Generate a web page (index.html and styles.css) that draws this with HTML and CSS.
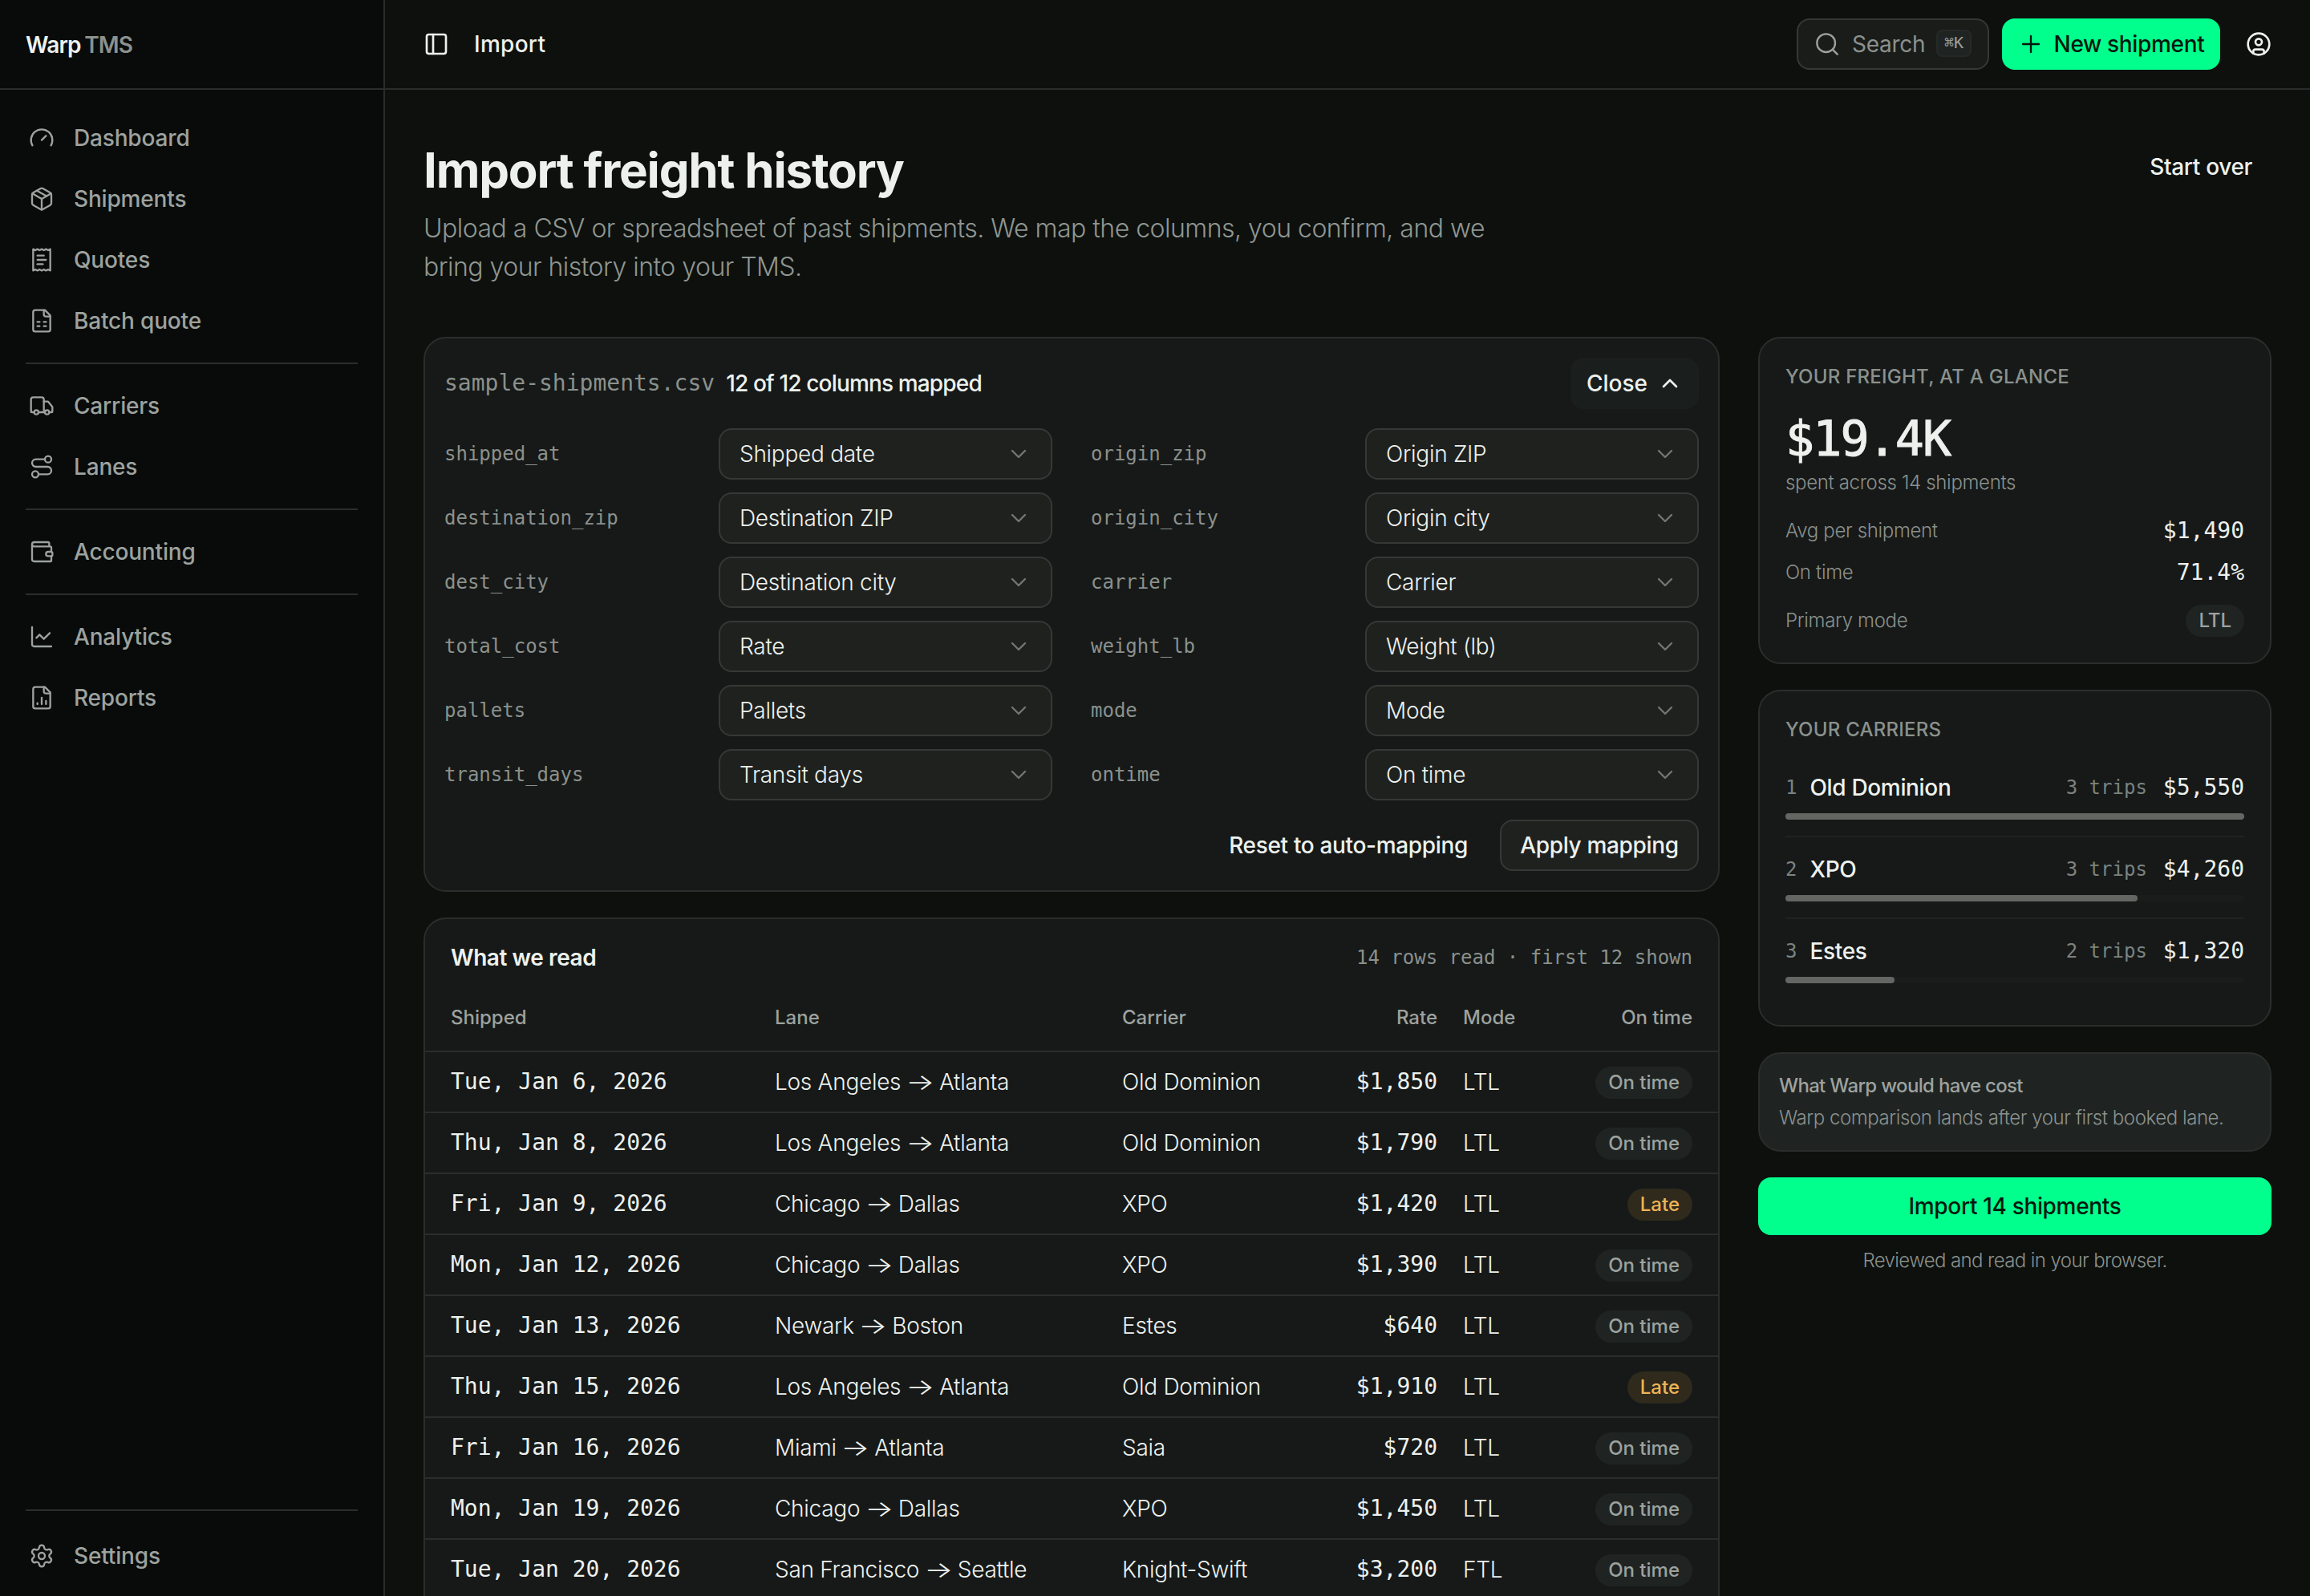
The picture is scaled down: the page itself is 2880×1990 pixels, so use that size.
FILE: index.html
```html
<!DOCTYPE html>
<html lang="en">
<head>
  <meta charset="UTF-8">
  <meta name="viewport" content="width=device-width, initial-scale=1.0">
  <title>Import - Warp TMS</title>
  <link rel="stylesheet" href="styles.css">
</head>
<body>
  <!-- shared select chevron -->
  <svg class="sprite" aria-hidden="true">
    <symbol id="chevron-down" viewBox="0 0 24 24"><path d="m6 9 6 6 6-6"/></symbol>
  </svg>

  <div class="app">
    <aside class="sidebar">
      <div class="brand">Warp <span>TMS</span></div>
      <nav class="nav">
        <a class="nav-item"><svg class="icon" viewBox="0 0 24 24"><path d="m12 14 4-4"/><path d="M3.34 19a10 10 0 1 1 17.32 0"/></svg>Dashboard</a>
        <a class="nav-item"><svg class="icon" viewBox="0 0 24 24"><path d="M11 21.73a2 2 0 0 0 2 0l7-4A2 2 0 0 0 21 16V8a2 2 0 0 0-1-1.73l-7-4a2 2 0 0 0-2 0l-7 4A2 2 0 0 0 3 8v8a2 2 0 0 0 1 1.73z"/><path d="M12 22V12"/><path d="m3.3 7 8.7 5 8.7-5"/><path d="m7.5 4.27 9 5.15"/></svg>Shipments</a>
        <a class="nav-item"><svg class="icon" viewBox="0 0 24 24"><path d="M4 2v20l2-1 2 1 2-1 2 1 2-1 2 1 2-1 2 1V2l-2 1-2-1-2 1-2-1-2 1-2-1-2 1Z"/><path d="M8 8h6"/><path d="M8 12h8"/><path d="M8 16h5"/></svg>Quotes</a>
        <a class="nav-item"><svg class="icon" viewBox="0 0 24 24"><path d="M15 2H6a2 2 0 0 0-2 2v16a2 2 0 0 0 2 2h12a2 2 0 0 0 2-2V7Z"/><path d="M14 2v4a2 2 0 0 0 2 2h4"/><path d="M8 13h2"/><path d="M14 13h2"/><path d="M8 17h2"/><path d="M14 17h2"/></svg>Batch quote</a>
        <hr>
        <a class="nav-item"><svg class="icon" viewBox="0 0 24 24"><path d="M14 18V6a2 2 0 0 0-2-2H4a2 2 0 0 0-2 2v11a1 1 0 0 0 1 1h2"/><path d="M15 18H9"/><path d="M19 18h2a1 1 0 0 0 1-1v-3.65a1 1 0 0 0-.22-.624l-3.48-4.35A1 1 0 0 0 17.52 8H14"/><circle cx="17" cy="18" r="2"/><circle cx="7" cy="18" r="2"/></svg>Carriers</a>
        <a class="nav-item"><svg class="icon" viewBox="0 0 24 24"><circle cx="6" cy="19" r="3"/><path d="M9 19h8.5a3.5 3.5 0 0 0 0-7h-11a3.5 3.5 0 0 1 0-7H15"/><circle cx="18" cy="5" r="3"/></svg>Lanes</a>
        <hr>
        <a class="nav-item"><svg class="icon" viewBox="0 0 24 24"><path d="M19 7V4a1 1 0 0 0-1-1H5a2 2 0 0 0 0 4h15a1 1 0 0 1 1 1v4h-3a2 2 0 0 0 0 4h3a1 1 0 0 0 1-1v-2a1 1 0 0 0-1-1"/><path d="M3 5v14a2 2 0 0 0 2 2h15a1 1 0 0 0 1-1v-4"/></svg>Accounting</a>
        <hr>
        <a class="nav-item"><svg class="icon" viewBox="0 0 24 24"><path d="M3 3v16a2 2 0 0 0 2 2h16"/><path d="m7 13 3-3 4 4 5.500-5.500"/></svg>Analytics</a>
        <a class="nav-item"><svg class="icon" viewBox="0 0 24 24"><path d="M15 2H6a2 2 0 0 0-2 2v16a2 2 0 0 0 2 2h12a2 2 0 0 0 2-2V7Z"/><path d="M14 2v4a2 2 0 0 0 2 2h4"/><path d="M8 18v-1"/><path d="M12 18v-6"/><path d="M16 18v-3"/></svg>Reports</a>
      </nav>
      <div class="nav nav-bottom">
        <hr>
        <a class="nav-item"><svg class="icon" viewBox="0 0 24 24"><path d="M9.671 4.136a2.34 2.34 0 0 1 4.659 0 2.34 2.34 0 0 0 3.319 1.915 2.34 2.34 0 0 1 2.33 4.033 2.34 2.34 0 0 0 0 3.831 2.34 2.34 0 0 1-2.33 4.033 2.34 2.34 0 0 0-3.319 1.915 2.34 2.34 0 0 1-4.659 0 2.34 2.34 0 0 0-3.32-1.915 2.34 2.34 0 0 1-2.33-4.033 2.34 2.34 0 0 0 0-3.831A2.34 2.34 0 0 1 6.35 6.051a2.34 2.34 0 0 0 3.319-1.915"/><circle cx="12" cy="12" r="3"/></svg>Settings</a>
      </div>
    </aside>

    <div class="main">
      <header class="topbar">
        <svg class="icon icon-bold" viewBox="0 0 24 24"><rect width="18" height="18" x="3" y="3" rx="2"/><path d="M9 3v18"/></svg>
        <span class="crumb">Import</span>
        <div class="search">
          <svg class="icon" viewBox="0 0 24 24"><circle cx="11" cy="11" r="8.500"/><path d="m21.500 21.500-4.300-4.300"/></svg>
          <span>Search</span>
          <kbd>⌘K</kbd>
        </div>
        <button class="btn btn-primary"><svg class="icon" viewBox="0 0 24 24"><path d="M4.500 12h15"/><path d="M12 4.500v15"/></svg>New shipment</button>
        <svg class="icon icon-bold user" viewBox="0 0 24 24"><circle cx="12" cy="12" r="10"/><circle cx="12" cy="10" r="3"/><path d="M7 20.662V19a2 2 0 0 1 2-2h6a2 2 0 0 1 2 2v1.662"/></svg>
      </header>

      <main class="content">
        <div class="page-head">
          <div>
            <h1>Import freight history</h1>
            <p>Upload a CSV or spreadsheet of past shipments. We map the columns, you confirm, and we bring your history into your TMS.</p>
          </div>
          <button class="btn btn-ghost">Start over</button>
        </div>

        <div class="columns">
          <div class="stack">
            <section class="card mapping">
              <div class="mapping-head">
                <span class="file">sample-shipments.csv</span>
                <span class="mapped">12 of 12 columns mapped</span>
                <button class="btn btn-close">Close<svg class="icon icon-bold" viewBox="0 0 24 24"><path d="m18 15-6-6-6 6"/></svg></button>
              </div>
              <div class="fields">
                <div class="field"><label>shipped_at</label><div class="select">Shipped date<svg class="icon"><use href="#chevron-down"/></svg></div></div>
                <div class="field"><label>origin_zip</label><div class="select">Origin ZIP<svg class="icon"><use href="#chevron-down"/></svg></div></div>
                <div class="field"><label>destination_zip</label><div class="select">Destination ZIP<svg class="icon"><use href="#chevron-down"/></svg></div></div>
                <div class="field"><label>origin_city</label><div class="select">Origin city<svg class="icon"><use href="#chevron-down"/></svg></div></div>
                <div class="field"><label>dest_city</label><div class="select">Destination city<svg class="icon"><use href="#chevron-down"/></svg></div></div>
                <div class="field"><label>carrier</label><div class="select">Carrier<svg class="icon"><use href="#chevron-down"/></svg></div></div>
                <div class="field"><label>total_cost</label><div class="select">Rate<svg class="icon"><use href="#chevron-down"/></svg></div></div>
                <div class="field"><label>weight_lb</label><div class="select">Weight (lb)<svg class="icon"><use href="#chevron-down"/></svg></div></div>
                <div class="field"><label>pallets</label><div class="select">Pallets<svg class="icon"><use href="#chevron-down"/></svg></div></div>
                <div class="field"><label>mode</label><div class="select">Mode<svg class="icon"><use href="#chevron-down"/></svg></div></div>
                <div class="field"><label>transit_days</label><div class="select">Transit days<svg class="icon"><use href="#chevron-down"/></svg></div></div>
                <div class="field"><label>ontime</label><div class="select">On time<svg class="icon"><use href="#chevron-down"/></svg></div></div>
              </div>
              <div class="mapping-actions">
                <button class="btn btn-ghost">Reset to auto-mapping</button>
                <button class="btn btn-outline">Apply mapping</button>
              </div>
            </section>

            <section class="card rows">
              <div class="table-head">
                <h2>What we read</h2>
                <span class="mono-note">14 rows read · first 12 shown</span>
              </div>
              <table>
                <colgroup><col class="c-date"><col class="c-lane"><col class="c-carrier"><col class="c-rate"><col class="c-mode"><col class="c-status"></colgroup>
                <thead>
                  <tr><th>Shipped</th><th>Lane</th><th>Carrier</th><th class="right">Rate</th><th>Mode</th><th class="right">On time</th></tr>
                </thead>
                <tbody>
                  <tr><td class="mono">Tue, Jan 6, 2026</td><td>Los Angeles <i class="arrow">→</i> Atlanta</td><td>Old Dominion</td><td class="mono right">$1,850</td><td>LTL</td><td class="right"><span class="badge">On time</span></td></tr>
                  <tr><td class="mono">Thu, Jan 8, 2026</td><td>Los Angeles <i class="arrow">→</i> Atlanta</td><td>Old Dominion</td><td class="mono right">$1,790</td><td>LTL</td><td class="right"><span class="badge">On time</span></td></tr>
                  <tr><td class="mono">Fri, Jan 9, 2026</td><td>Chicago <i class="arrow">→</i> Dallas</td><td>XPO</td><td class="mono right">$1,420</td><td>LTL</td><td class="right"><span class="badge late">Late</span></td></tr>
                  <tr><td class="mono">Mon, Jan 12, 2026</td><td>Chicago <i class="arrow">→</i> Dallas</td><td>XPO</td><td class="mono right">$1,390</td><td>LTL</td><td class="right"><span class="badge">On time</span></td></tr>
                  <tr><td class="mono">Tue, Jan 13, 2026</td><td>Newark <i class="arrow">→</i> Boston</td><td>Estes</td><td class="mono right">$640</td><td>LTL</td><td class="right"><span class="badge">On time</span></td></tr>
                  <tr><td class="mono">Thu, Jan 15, 2026</td><td>Los Angeles <i class="arrow">→</i> Atlanta</td><td>Old Dominion</td><td class="mono right">$1,910</td><td>LTL</td><td class="right"><span class="badge late">Late</span></td></tr>
                  <tr><td class="mono">Fri, Jan 16, 2026</td><td>Miami <i class="arrow">→</i> Atlanta</td><td>Saia</td><td class="mono right">$720</td><td>LTL</td><td class="right"><span class="badge">On time</span></td></tr>
                  <tr><td class="mono">Mon, Jan 19, 2026</td><td>Chicago <i class="arrow">→</i> Dallas</td><td>XPO</td><td class="mono right">$1,450</td><td>LTL</td><td class="right"><span class="badge">On time</span></td></tr>
                  <tr><td class="mono">Tue, Jan 20, 2026</td><td>San Francisco <i class="arrow">→</i> Seattle</td><td>Knight-Swift</td><td class="mono right">$3,200</td><td>FTL</td><td class="right"><span class="badge">On time</span></td></tr>
                </tbody>
              </table>
            </section>
          </div>

          <div class="stack">
            <section class="card side-card">
              <h3>Your freight, at a glance</h3>
              <div class="total">$19.4K</div>
              <div class="total-note">spent across 14 shipments</div>
              <div class="stats">
                <div class="stat"><span>Avg per shipment</span><b>$1,490</b></div>
                <div class="stat"><span>On time</span><b>71.4%</b></div>
                <div class="stat"><span>Primary mode</span><span class="badge">LTL</span></div>
              </div>
            </section>

            <section class="card side-card">
              <h3>Your carriers</h3>
              <div class="carrier">
                <div class="carrier-row"><span class="rank">1</span><span class="name">Old Dominion</span><span class="trips">3 trips</span><span class="cost">$5,550</span></div>
                <div class="bar"><div class="bar-fill" style="width: 100%"></div></div>
              </div>
              <div class="carrier">
                <div class="carrier-row"><span class="rank">2</span><span class="name">XPO</span><span class="trips">3 trips</span><span class="cost">$4,260</span></div>
                <div class="bar"><div class="bar-fill" style="width: 76.8%"></div></div>
              </div>
              <div class="carrier">
                <div class="carrier-row"><span class="rank">3</span><span class="name">Estes</span><span class="trips">2 trips</span><span class="cost">$1,320</span></div>
                <div class="bar"><div class="bar-fill" style="width: 23.8%"></div></div>
              </div>
            </section>

            <section class="card compare">
              <strong>What Warp would have cost</strong>
              <p>Warp comparison lands after your first booked lane.</p>
            </section>

            <div class="submit">
              <button class="btn btn-primary btn-wide">Import 14 shipments</button>
              <p>Reviewed and read in your browser.</p>
            </div>
          </div>
        </div>
      </main>
    </div>
  </div>
</body>
</html>
```
FILE: styles.css
```css
:root {
  --bg: #0d100d;
  --sidebar: #080b0a;
  --card: #161918;
  --raised: #1f2423;
  --field: #1f211f;
  --line: #2a2d2b;
  --line-strong: #353836;
  --text: #edf1ee;
  --muted: #9da29f;
  --dim: #8b918d;
  --green: #00ff8c;
  --mono: "DejaVu Sans Mono", monospace;
}

* {
  box-sizing: border-box;
}

body {
  margin: 0;
  height: 100vh;
  overflow: hidden;
  background: var(--bg);
  color: var(--text);
  font-family: Inter, sans-serif;
  font-size: 28px;
  font-weight: 300;
  line-height: 40px;
}

h1, h2, h3, p {
  margin: 0;
}

.sprite {
  display: none;
}

.icon {
  width: 32px;
  height: 32px;
  flex: none;
  fill: none;
  stroke: currentColor;
  stroke-width: 1.75;
  stroke-linecap: round;
  stroke-linejoin: round;
}
.icon-bold {
  stroke-width: 2;
}

.app {
  display: flex;
  height: 100vh;
}

/* Sidebar */
.sidebar {
  width: 480px;
  flex: none;
  display: flex;
  flex-direction: column;
  background: var(--sidebar);
  border-right: 2px solid var(--line);
}
.brand {
  height: 112px;
  padding: 36px 32px 0;
  border-bottom: 2px solid var(--line);
  font-weight: 600;
  letter-spacing: -0.03em;
  word-spacing: -0.06em;
}
.brand span {
  color: var(--dim);
}
.nav {
  padding: 22px 32px 0;
}
.nav hr {
  height: 2px;
  margin: 14px 0;
  border: 0;
  background: var(--line);
}
.nav-item {
  display: flex;
  align-items: center;
  gap: 24px;
  height: 76px;
  padding-left: 4px;
  color: var(--muted);
  font-weight: 500;
  letter-spacing: -0.006em;
}
.nav-bottom {
  margin-top: auto;
  padding: 0 32px 12px;
}
.nav-bottom hr {
  margin: 0 0 18px;
}

/* Top bar */
.main {
  flex: 1;
  min-width: 0;
}
.topbar {
  display: flex;
  align-items: center;
  height: 112px;
  padding: 0 48px;
  border-bottom: 2px solid var(--line);
}
.crumb {
  margin: 0 auto 0 31px;
  font-weight: 500;
  letter-spacing: 0.01em;
}
.search {
  display: flex;
  align-items: center;
  width: 240px;
  height: 64px;
  margin-right: 16px;
  padding: 0 20px;
  border: 2px solid var(--line-strong);
  border-radius: 16px;
  background: #1a1c1a;
  color: var(--dim);
}
.search span {
  margin: 0 auto 0 15px;
  font-weight: 400;
  letter-spacing: -0.01em;
}
.search .icon {
  color: var(--muted);
}
kbd {
  width: 44px;
  height: 34px;
  margin-bottom: 2px;
  border: 2px solid #252a29;
  border-radius: 8px;
  background: var(--raised);
  color: var(--muted);
  font: 20px/28px var(--mono);
  text-align: center;
}
.user {
  margin-left: 32px;
}

.btn {
  display: flex;
  align-items: center;
  justify-content: center;
  height: 64px;
  padding: 0 22px;
  border: 2px solid transparent;
  border-radius: 16px;
  background: none;
  color: var(--text);
  font: 500 28px/40px Inter, sans-serif;
  letter-spacing: -0.012em;
  white-space: nowrap;
}
.btn-primary {
  width: 272px;
  gap: 13px;
  padding: 0 18px;
  border: 0;
  background: var(--green);
  color: #03180d;
}
.btn-outline {
  width: 248px;
  border-color: var(--line-strong);
  background: var(--field);
}
.btn-close {
  width: 160px;
  gap: 12px;
  margin-left: auto;
  padding: 0 18px;
  background: #1a1f1e;
  letter-spacing: 0;
}
.btn-wide {
  width: 100%;
  height: 72px;
}

/* Page */
.content {
  padding: 64px 48px 0;
}
.page-head {
  display: flex;
  justify-content: space-between;
  align-items: flex-start;
  margin-bottom: 63px;
}
.page-head h1 {
  margin-bottom: 13px;
  font-size: 60px;
  line-height: 72px;
  font-weight: 650;
  letter-spacing: -0.02em;
}
.page-head p {
  max-width: 1340px;
  color: #8f9692;
  font-size: 32px;
  line-height: 48px;
  letter-spacing: -0.016em;
}
.columns {
  display: grid;
  grid-template-columns: 1616px 640px;
  gap: 48px;
}
.stack {
  display: flex;
  flex-direction: column;
  gap: 32px;
}
.card {
  border: 2px solid var(--line);
  border-radius: 28px;
  background: var(--card);
}

/* Column mapping */
.mapping {
  padding: 24px;
}
.mapping-head {
  display: flex;
  align-items: center;
  margin-bottom: 24px;
}
.file {
  margin-right: 14px;
  color: var(--dim);
  font-family: var(--mono);
}
.mapped {
  font-weight: 500;
  letter-spacing: -0.03em;
}
.fields {
  display: grid;
  grid-template-columns: 1fr 1fr;
  gap: 16px 48px;
}
.field {
  display: flex;
  align-items: center;
  justify-content: space-between;
}
.field label {
  color: var(--dim);
  font-family: var(--mono);
  font-size: 24px;
}
.select {
  display: flex;
  align-items: center;
  justify-content: space-between;
  width: 416px;
  height: 64px;
  padding: 0 24px;
  border: 2px solid var(--line-strong);
  border-radius: 16px;
  background: var(--field);
  letter-spacing: -0.01em;
}
.select .icon {
  color: #727774;
}
.mapping-actions {
  display: flex;
  justify-content: flex-end;
  gap: 16px;
  margin-top: 24px;
}

/* Rows table */
.rows {
  padding-bottom: 32px;
}
.table-head {
  display: flex;
  justify-content: space-between;
  padding: 28px 32px 12px;
}
.table-head h2 {
  font-size: 28px;
  font-weight: 600;
  letter-spacing: -0.015em;
}
.mono-note {
  color: var(--dim);
  font-family: var(--mono);
  font-size: 24px;
}
table {
  width: 100%;
  table-layout: fixed;
  border-spacing: 0;
}
.c-date { width: 420px; }
.c-lane { width: 433px; }
.c-carrier { width: 230px; }
.c-rate { width: 195px; }
.c-mode { width: 130px; }
.c-status { width: 204px; }
th, td {
  height: 76px;
  padding: 0 16px;
  border-bottom: 2px solid var(--line);
  text-align: left;
  white-space: nowrap;
}
td {
  letter-spacing: -0.01em;
}
th {
  height: 86px;
  padding-top: 2px;
  color: var(--muted);
  font-size: 24px;
  font-weight: 500;
}
th:first-child, td:first-child {
  padding-left: 32px;
}
th:last-child, td:last-child {
  padding-right: 32px;
}
th.right, td.right {
  text-align: right;
}
td.mono {
  font-family: var(--mono);
  letter-spacing: 0;
}
.arrow {
  display: inline-block;
  margin: 0 3px;
  font-style: normal;
  transform: scaleX(1.35);
}
.badge {
  display: inline-block;
  height: 40px;
  padding: 0 16px;
  border-radius: 20px;
  background: var(--raised);
  color: var(--muted);
  font-size: 24px;
  font-weight: 500;
  line-height: 40px;
  letter-spacing: 0;
  vertical-align: middle;
}
.late {
  background: #2f2a1c;
  color: #ecb457;
}

/* Right column */
.side-card {
  padding: 32px;
}
.side-card h3 {
  color: var(--dim);
  font-size: 24px;
  line-height: 32px;
  font-weight: 500;
  letter-spacing: 0.01em;
  text-transform: uppercase;
}
.total {
  margin: 25px 0 3px;
  font: 60px/72px var(--mono);
  letter-spacing: -0.032em;
  -webkit-text-stroke: 1px currentColor;
}
.total-note {
  color: var(--dim);
  font-size: 24px;
  line-height: 32px;
  letter-spacing: -0.014em;
}
.stats {
  display: flex;
  flex-direction: column;
  gap: 12px;
  margin-top: 24px;
}
.stat {
  display: flex;
  justify-content: space-between;
  height: 40px;
  color: var(--dim);
  font-size: 24px;
  letter-spacing: -0.014em;
}
.stat:last-child {
  margin-top: 8px;
}
.stat b {
  color: var(--text);
  font: 28px/40px var(--mono);
  letter-spacing: 0;
}
.carrier {
  padding: 20px 0;
  border-bottom: 2px solid #1f2221;
}
.side-card h3 + .carrier {
  margin-top: 16px;
}
.carrier:last-child {
  border-bottom: 0;
}
.carrier-row {
  display: flex;
  margin-bottom: 12px;
}
.rank, .trips {
  color: #7c827f;
  font-family: var(--mono);
  font-size: 24px;
}
.name {
  margin: 0 auto 0 16px;
  font-weight: 500;
  letter-spacing: -0.012em;
}
.cost {
  margin-left: 20px;
  font-family: var(--mono);
}
.bar {
  height: 8px;
  border-radius: 4px;
  background: #191c1b;
}
.bar-fill {
  height: 8px;
  border-radius: 4px;
  background: #646664;
}
.compare {
  padding: 24px;
  background: var(--raised);
  color: var(--dim);
  font-size: 24px;
  line-height: 32px;
  letter-spacing: -0.018em;
}
.compare strong {
  display: block;
  margin-bottom: 8px;
  color: var(--muted);
  font-weight: 500;
  letter-spacing: -0.028em;
}
.submit p {
  margin-top: 16px;
  color: var(--dim);
  font-size: 24px;
  line-height: 32px;
  letter-spacing: -0.025em;
  text-align: center;
}
```
